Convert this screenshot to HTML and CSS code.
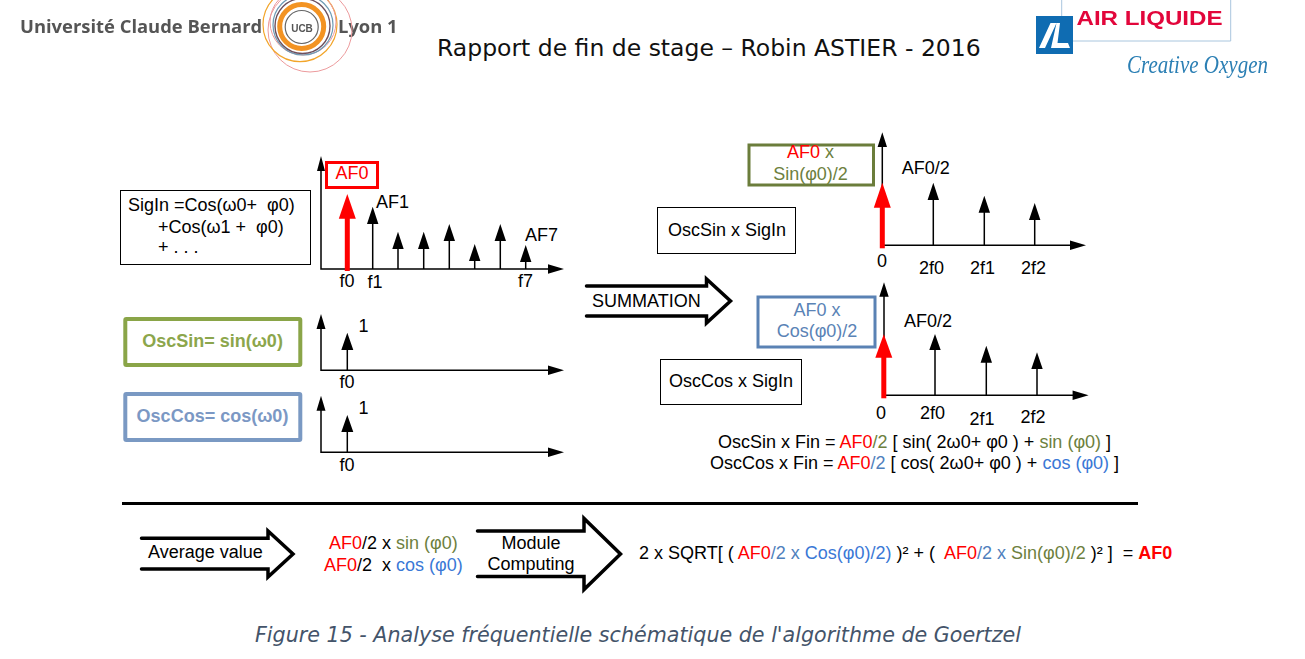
FILE: index.html
```html
<!DOCTYPE html>
<html lang="fr">
<head>
<meta charset="utf-8">
<title>Rapport de fin de stage</title>
<link rel="stylesheet" href="styles.css">
</head>
<body>
<main class="page">
  <header class="header">
    <svg class="logo-ucbl" viewBox="0 0 400 100" width="400" height="100" role="img" aria-label="Université Claude Bernard Lyon 1">
      <text class="ucbl-name" x="20" y="33">Université Claude Bernard</text>
      <text class="ucbl-name" x="338" y="33">Lyon 1</text>
      <circle class="ring pink" cx="310" cy="30" r="42"/>
      <circle class="ring gold" cx="300" cy="24.6" r="37"/>
      <circle class="ring pink" cx="303" cy="22" r="33"/>
      <circle class="ring steel" cx="303" cy="25" r="30"/>
      <circle class="ring plum" cx="302.5" cy="26" r="27.5"/>
      <circle class="ring orange" cx="301.7" cy="26.5" r="22"/>
      <circle class="ring inner" cx="301.7" cy="27" r="16.5"/>
      <text class="ucbl-mark" x="302" y="32">UCB</text>
    </svg>
    <h1 class="title">Rapport de fin de stage – Robin ASTIER - 2016</h1>
    <svg class="logo-al" viewBox="1030 0 275 100" width="275" height="100" role="img" aria-label="Air Liquide, Creative Oxygen">
      <path class="al-frame" d="M1061.7 0V16M1072 41H1230.7V0"/>
      <rect class="al-square" x="1036" y="16" width="37" height="38"/>
      <path class="al-glyph" d="M1050.5 23H1056.5L1045 48H1039ZM1056.5 23H1060L1057.5 43H1068L1070 48H1051Z"/>
      <text class="al-name" x="1076.5" y="24.7" textLength="146" lengthAdjust="spacingAndGlyphs">AIR LIQUIDE</text>
      <text class="al-tag" x="1127" y="73" textLength="141" lengthAdjust="spacingAndGlyphs">Creative Oxygen</text>
    </svg>
  </header>

  <svg class="diagram" viewBox="0 100 1305 510" width="1305" height="510" role="img" aria-label="Analyse fréquentielle schématique">
    <!-- input signal -->
    <rect class="box thin" x="120.5" y="190.5" width="190" height="74"/>
    <text class="t" x="128" y="211">SigIn =Cos(ω0+  φ0)</text>
    <text class="t" x="158" y="233">+Cos(ω1 +  φ0)</text>
    <text class="t" x="158" y="253">+ . . .</text>

    <path class="axis" d="M321 165V269H552"/>
    <path class="stem" d="M372.7 269V220M398 269V245M423.7 269V245M449.3 269V237M474.7 269V257M500.3 269V237M525.7 269V258"/>
    <path class="head" d="M321 156L325 171H317ZM564 269L548 264.3V273.7ZM372.7 206.7L378.4 224H367ZM398 231.7L403.7 249H392.3ZM423.7 231.7L429.4 249H418ZM449.3 224L455 241H443.6ZM474.7 244L480.4 261H469ZM500.3 224L506 241H494.6ZM525.7 245L531.4 262H520Z"/>
    <path class="red-stem" d="M347.3 271V215"/>
    <path class="red-head" d="M347.3 194L355.8 218.7H338.8Z"/>
    <rect class="box af0" x="326.5" y="162.5" width="51" height="25"/>
    <text class="t red mid" x="352" y="179">AF0</text>
    <text class="t" x="376" y="208">AF1</text>
    <text class="t" x="525" y="241">AF7</text>
    <text class="t" x="339.5" y="287">f0</text>
    <text class="t" x="367.5" y="288">f1</text>
    <text class="t" x="518" y="287">f7</text>

    <!-- oscillators -->
    <rect class="box osc-sin" x="125.3" y="319" width="175" height="46" rx="1"/>
    <text class="t b olive-light mid" x="212.5" y="346.7">OscSin= sin(ω0)</text>
    <path class="axis" d="M321 322V370.3H552"/>
    <path class="stem" d="M347.3 370.3V345"/>
    <path class="head" d="M321 314L325.5 329H316.5ZM564 370.3L548 365.6V375ZM347.3 332.7L353.3 350H341.3Z"/>
    <text class="t" x="358.5" y="331.7">1</text>
    <text class="t" x="339.5" y="388">f0</text>

    <rect class="box osc-cos" x="125.3" y="394" width="175" height="46" rx="1"/>
    <text class="t b blue-light mid" x="212.5" y="422">OscCos= cos(ω0)</text>
    <path class="axis" d="M321 404V452.3H552"/>
    <path class="stem" d="M347.3 452.3V428"/>
    <path class="head" d="M321 395.7L325.5 410.7H316.5ZM564 452.3L548 447.6V457ZM347.3 415L353.3 432H341.3Z"/>
    <text class="t" x="358.5" y="413.7">1</text>
    <text class="t" x="339.5" y="470.7">f0</text>

    <!-- summation -->
    <path class="big-arrow" d="M586.5 286H706.5V279L730.5 301L706.5 323V316H586.5"/>
    <text class="t" x="592" y="306.5">SUMMATION</text>

    <!-- product with sine -->
    <rect class="box thin" x="657.5" y="207.5" width="138" height="46"/>
    <text class="t" x="668" y="235.7">OscSin x SigIn</text>
    <path class="axis" d="M882.3 142V245.3H1072"/>
    <path class="stem" d="M933.3 245.3V196M984.3 245.3V208M1034.7 245.3V216"/>
    <path class="head" d="M882.3 132.3L887 147H877.6ZM1086 245.3L1070 240.6V250ZM933.3 182.7L939 200H927.6ZM984.3 195.7L990 212.7H978.6ZM1034.7 203L1040.4 220H1029Z"/>
    <path class="red-stem" d="M882.3 248.3V203"/>
    <path class="red-head" d="M882.3 182.7L890.8 207.7H873.8Z"/>
    <rect class="box product-sin" x="749" y="145" width="124.5" height="40"/>
    <text class="t mid" x="810.5" y="158.3"><tspan class="red">AF0</tspan><tspan class="olive"> x</tspan></text>
    <text class="t olive mid" x="810.5" y="180.3">Sin(φ0)/2</text>
    <text class="t" x="901.7" y="174.3">AF0/2</text>
    <text class="t mid" x="882" y="266.7">0</text>
    <text class="t" x="919" y="274.3">2f0</text>
    <text class="t" x="970" y="274.3">2f1</text>
    <text class="t" x="1021" y="274.3">2f2</text>

    <!-- product with cosine -->
    <rect class="box thin" x="660.5" y="359.5" width="141" height="45"/>
    <text class="t" x="669" y="386.7">OscCos x SigIn</text>
    <path class="axis" d="M884 292V395.3H1075"/>
    <path class="stem" d="M935 395.3V346M986.3 395.3V358M1037 395.3V365"/>
    <path class="head" d="M884 282.3L888.7 296.7H879.3ZM1088.6 395.3L1072.6 390.6V400ZM935 334L940.7 350H929.3ZM986.3 345.7L992 362.7H980.6ZM1037 352.3L1042.7 369H1031.3Z"/>
    <path class="red-stem" d="M883.8 398.3V354"/>
    <path class="red-head" d="M883.8 334.3L892.3 357.7H875.3Z"/>
    <rect class="box product-cos" x="758" y="297" width="117" height="50"/>
    <text class="t blue-box mid" x="817" y="315.7">AF0 x</text>
    <text class="t blue-box mid" x="817" y="336.7">Cos(φ0)/2</text>
    <text class="t" x="904" y="326.7">AF0/2</text>
    <text class="t mid" x="881" y="419.3">0</text>
    <text class="t" x="920" y="418.7">2f0</text>
    <text class="t" x="969.5" y="425">2f1</text>
    <text class="t" x="1020.5" y="423.3">2f2</text>

    <!-- results -->
    <text class="t" x="718" y="447.7">OscSin x Fin = <tspan class="red">AF0</tspan><tspan class="olive">/2</tspan> [ sin( 2ω0+ φ0 ) + <tspan class="olive">sin (φ0)</tspan> ]</text>
    <text class="t" x="710" y="469.3">OscCos x Fin = <tspan class="red">AF0</tspan><tspan class="steel-text">/2</tspan> [ cos( 2ω0+ φ0 ) + <tspan class="blue">cos (φ0)</tspan> ]</text>

    <path class="rule" d="M122 503.5H1138"/>

    <!-- bottom line -->
    <path class="big-arrow" d="M141.5 538.3H268V531L293 554L268 577V569H141.5"/>
    <text class="t" x="148" y="558.3">Average value</text>
    <text class="t" x="329" y="549"><tspan class="red">AF0</tspan>/2 x <tspan class="olive">sin (φ0)</tspan></text>
    <text class="t" x="324" y="571"><tspan class="red">AF0</tspan>/2  x <tspan class="blue">cos (φ0)</tspan></text>
    <path class="big-arrow" d="M477.5 531H584V518.5L620.5 554L584 589.5V576.5H477.5"/>
    <text class="t mid" x="531" y="549">Module</text>
    <text class="t mid" x="531" y="570.3">Computing</text>
    <text class="t" x="639" y="559">2 x SQRT[ ( <tspan class="red">AF0</tspan><tspan class="steel-text">/2 x </tspan><tspan class="blue">Cos(φ0)/2)</tspan> )² + (  <tspan class="red">AF0</tspan><tspan class="steel-text">/2 x </tspan><tspan class="olive">Sin(φ0)/2</tspan> )² ]  = <tspan class="red b">AF0</tspan></text>
  </svg>

  <p class="caption">Figure 15 - Analyse fréquentielle schématique de l'algorithme de Goertzel</p>
</main>
</body>
</html>
```
FILE: styles.css
```css
html, body {
  margin: 0;
  padding: 0;
  background: #fff;
}

.page {
  width: 1305px;
  height: 659px;
  overflow: hidden;
  display: flex;
  flex-direction: column;
}

.header {
  height: 100px;
  display: flex;
  align-items: flex-start;
}

.logo-ucbl,
.logo-al {
  display: block;
  flex: none;
  filter: blur(0.35px);
}

.logo-al {
  margin-left: auto;
}

.title {
  margin: 34px 0 0 37px;
  font: 400 23.5px/28px "DejaVu Sans", sans-serif;
  color: #111;
  white-space: nowrap;
}

.ucbl-name {
  font: 700 18.4px "Open Sans", sans-serif;
  fill: #555;
}

.ucbl-mark {
  font: 700 10px "Liberation Sans", sans-serif;
  fill: #555;
  text-anchor: middle;
}

.ring { fill: none; stroke-width: 1; }
.ring.pink { stroke: #ec9a9c; }
.ring.gold { stroke: #f2a52a; stroke-width: 1.2; }
.ring.steel { stroke: #6f9bb5; stroke-width: 1.2; }
.ring.plum { stroke: #6d4f5c; stroke-width: 1.4; }
.ring.orange { stroke: #f39322; stroke-width: 5; }
.ring.inner { stroke: #666; stroke-width: 1.2; }

.al-frame { fill: none; stroke: #a9c6de; stroke-width: 1; }
.al-square { fill: #0f6cb2; }
.al-glyph { fill: #fff; }
.al-name { font: 700 21px "Liberation Sans", sans-serif; fill: #e2063b; }
.al-tag { font: italic 400 25px "Liberation Serif", serif; fill: #2b7fb4; }

.diagram {
  display: block;
  flex: none;
}

.t {
  font: 400 18px "Liberation Sans", Arial, sans-serif;
  fill: #000;
  white-space: pre;
}

.mid { text-anchor: middle; }
.b { font-weight: 700; }
.red { fill: #ff0000; }
.olive { fill: #6d7f3e; }
.olive-light { fill: #8ca64c; }
.blue { fill: #3a78d6; }
.blue-light { fill: #7b98c4; }
.blue-box { fill: #5a83b6; }
.steel-text { fill: #4f7fbd; }

.box { fill: #fff; }
.box.thin { stroke: #000; stroke-width: 1; }
.box.af0 { stroke: #ff0000; stroke-width: 3; }
.box.osc-sin { stroke: #8aa548; stroke-width: 4; }
.box.osc-cos { stroke: #7a99c3; stroke-width: 4; }
.box.product-sin { stroke: #6b7d3b; stroke-width: 3; }
.box.product-cos { stroke: #5a82b4; stroke-width: 3; }

.axis { fill: none; stroke: #000; stroke-width: 1.5; }
.stem { fill: none; stroke: #000; stroke-width: 1.5; }
.head { fill: #000; }
.red-stem { fill: none; stroke: #ff0000; stroke-width: 5; }
.red-head { fill: #ff0000; }

.big-arrow {
  fill: none;
  stroke: #000;
  stroke-width: 3.5;
  stroke-linecap: round;
  stroke-linejoin: miter;
}

.rule { fill: none; stroke: #000; stroke-width: 3; }

.caption {
  margin: 12px 0 0 255px;
  font: italic 400 20.65px/26px "DejaVu Sans", sans-serif;
  color: #44546a;
  white-space: nowrap;
}
```
